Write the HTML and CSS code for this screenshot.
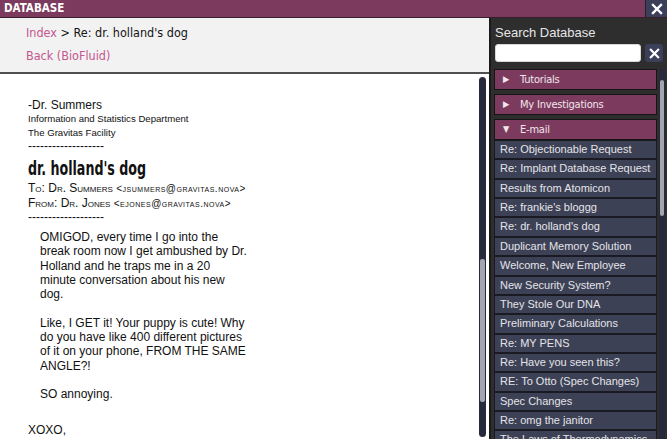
FILE: index.html
```html
<!DOCTYPE html>
<html lang="en">
<head>
<meta charset="utf-8">
<title>Database</title>
<link rel="stylesheet" href="styles.css">
</head>
<body>
<div class="window">
  <header class="titlebar">
    <h1 class="title">DATABASE</h1>
    <button class="close-btn" aria-label="Close">
      <svg viewBox="0 0 12 12" width="12" height="12"><path d="M2 2 L10 10 M10 2 L2 10" stroke="#fff" stroke-width="2.4" stroke-linecap="square"/></svg>
    </button>
  </header>

  <div class="main">
    <section class="article-pane">
      <nav class="crumbs">
        <div class="crumb-line"><a class="link">Index</a> <span class="sep">&gt;</span> <span class="current">Re: dr. holland's dog</span></div>
        <div class="crumb-line"><a class="link">Back (BioFluid)</a></div>
      </nav>
      <div class="article-body">
        <div class="doc">
          <div class="sig">
            <div class="sig-name">-Dr. Summers</div>
            <div class="sig-line">Information and Statistics Department</div>
            <div class="sig-line">The Gravitas Facility</div>
          </div>
          <div class="rule">-------------------</div>
          <h2 class="subject"><span class="subject-text">dr. holland's dog</span></h2>
          <div class="addr">To: Dr. Summers <span class="mail">&lt;jsummers@gravitas.nova&gt;</span></div>
          <div class="addr">From: Dr. Jones <span class="mail">&lt;ejones@gravitas.nova&gt;</span></div>
          <div class="rule">-------------------</div>
          <div class="message">
            <p>OMIGOD, every time I go into the<br>break room now I get ambushed by Dr.<br>Holland and he traps me in a 20<br>minute conversation about his new<br>dog.</p>
            <p>Like, I GET it! Your puppy is cute! Why<br>do you have like 400 different pictures<br>of it on your phone, FROM THE SAME<br>ANGLE?!</p>
            <p>SO annoying.</p>
          </div>
          <div class="signoff">XOXO,<br>Dr. Jones</div>
        </div>
        <div class="scrollbar main-scroll"><div class="thumb"></div></div>
      </div>
    </section>

    <aside class="sidebar">
      <label class="search-label" for="q">Search Database</label>
      <div class="search-row">
        <input id="q" class="search-input" type="text">
        <button class="clear-btn" aria-label="Clear">
          <svg viewBox="0 0 12 12" width="11" height="11"><path d="M2 2 L10 10 M10 2 L2 10" stroke="#fff" stroke-width="2.4" stroke-linecap="square"/></svg>
        </button>
      </div>
      <div class="tree">
        <div class="tree-list">
          <div class="cat"><span class="arrow">&#9654;</span>Tutorials</div>
          <div class="cat"><span class="arrow">&#9654;</span>My Investigations</div>
          <div class="cat open"><span class="arrow">&#9660;</span>E-mail</div>
          <ul class="items">
            <li>Re: Objectionable Request</li>
            <li>Re: Implant Database Request</li>
            <li>Results from Atomicon</li>
            <li>Re: frankie's bloggg</li>
            <li>Re: dr. holland's dog</li>
            <li>Duplicant Memory Solution</li>
            <li>Welcome, New Employee</li>
            <li>New Security System?</li>
            <li>They Stole Our DNA</li>
            <li>Preliminary Calculations</li>
            <li>Re: MY PENS</li>
            <li>Re: Have you seen this?</li>
            <li>RE: To Otto (Spec Changes)</li>
            <li>Spec Changes</li>
            <li>Re: omg the janitor</li>
            <li>The Laws of Thermodynamics</li>
          </ul>
        </div>
        <div class="scrollbar side-scroll"><div class="thumb"></div></div>
      </div>
    </aside>
  </div>
</div>
</body>
</html>
```
FILE: styles.css
```css
* { box-sizing: border-box; }

html, body {
  margin: 0;
  padding: 0;
  width: 667px;
  height: 439px;
  overflow: hidden;
  background: #2c2c2c;
}

.window {
  display: flex;
  flex-direction: column;
  width: 667px;
  height: 439px;
  font-family: "Liberation Sans", Arial, sans-serif;
}

/* ---------- title bar ---------- */
.titlebar {
  display: flex;
  align-items: stretch;
  height: 18px;
  background: #7c3b5e;
  border-bottom: 1px solid #3a1d2c;
  flex: none;
}
.title {
  flex: 1;
  margin: 0;
  padding: 0 0 0 4px;
  font-family: "DejaVu Sans Condensed", "DejaVu Sans", sans-serif;
  font-weight: bold;
  font-size: 11.5px;
  line-height: 17px;
  color: #ffffff;
}
.close-btn {
  width: 22px;
  padding: 0;
  border: 0;
  border-left: 1px solid #22202c;
  background: #3b3f5a;
  display: flex;
  align-items: center;
  justify-content: center;
}

/* ---------- main split ---------- */
.main {
  flex: 1;
  display: flex;
  min-height: 0;
}

.article-pane {
  width: 489px;
  display: flex;
  flex-direction: column;
  background: #ffffff;
}

.crumbs {
  height: 56px;
  flex: none;
  background: #f2f2f2;
  border-bottom: 2px solid #505050;
  padding: 5px 0 0 26px;
  font-family: "DejaVu Sans Condensed", "DejaVu Sans", sans-serif;
  font-size: 12.5px;
}
.crumb-line {
  height: 23px;
  line-height: 20px;
  white-space: nowrap;
}
.link { color: #c4568e; }
.sep, .current { color: #141414; }

.article-body {
  flex: 1;
  display: flex;
  min-height: 0;
  padding: 3px 3px 2px 0;
}

.doc {
  flex: 1;
  overflow: hidden;
  padding: 22px 0 0 28px;
  color: #111;
}

.sig-name { font-size: 12px; line-height: 13px; }
.sig-line { font-size: 9.6px; line-height: 14px; }
.rule { font-size: 12px; line-height: 12px; height: 12px; overflow: hidden; }

.subject {
  margin: 5px 0 2px;
  height: 22px;
  font-family: "DejaVu Sans Condensed", "DejaVu Sans", sans-serif;
  font-weight: bold;
  font-size: 19px;
  line-height: 22px;
  color: #111;
  white-space: nowrap;
}
.subject-text {
  display: inline-block;
  transform: scaleX(0.74);
  transform-origin: left center;
}

.addr {
  font-variant: small-caps;
  font-size: 12px;
  line-height: 15px;
  white-space: nowrap;
}
.mail { font-size: 10px; letter-spacing: 0.5px; }

.message {
  padding-left: 12px;
  margin-top: 7px;
  font-size: 12px;
  line-height: 14.3px;
  white-space: nowrap;
}
.message p { margin: 0 0 14.3px; }

.signoff {
  margin-top: 21px;
  font-size: 12px;
  line-height: 14.3px;
}

/* ---------- scrollbars ---------- */
.scrollbar {
  flex: none;
  display: flex;
  flex-direction: column;
  background: #262a3b;
  border-radius: 4px;
}
.thumb {
  background: #a3a5b1;
  border-radius: 2px;
}
.main-scroll {
  width: 7px;
  padding: 182px 1px 33px;
}
.main-scroll .thumb { height: 143px; }

.side-scroll {
  width: 6px;
  margin: 0 3px 0 2px;
  padding: 11px 1px 0;
  border-radius: 3px 3px 0 0;
}
.side-scroll .thumb { height: 136px; }

/* ---------- sidebar ---------- */
.sidebar {
  width: 178px;
  flex: none;
  background: #2e2e2e;
  border-left: 2px solid #1b1b1b;
  display: flex;
  flex-direction: column;
  padding: 7px 0 0 3px;
  min-height: 0;
}
.search-label {
  color: #e6e6e6;
  font-size: 13px;
  line-height: 15px;
  padding-left: 1px;
}
.search-row {
  display: flex;
  gap: 4px;
  margin-top: 4px;
  height: 18px;
  padding-left: 1px;
}
.search-input {
  width: 146px;
  height: 18px;
  border: 1px solid #d8d8d8;
  border-radius: 3px;
  background: #ffffff;
  padding: 0;
}
.clear-btn {
  width: 18px;
  height: 18px;
  padding: 0;
  border: 0;
  border-radius: 3px;
  background: #3b3f5a;
  display: flex;
  align-items: center;
  justify-content: center;
}

.tree {
  flex: 1;
  display: flex;
  min-height: 0;
  margin-top: 7px;
}
.tree-list {
  width: 163px;
  flex: none;
  overflow: hidden;
}

.cat {
  height: 21px;
  margin-bottom: 4px;
  background: #7c3b5e;
  border: 1px solid #151515;
  color: #f1e6ec;
  font-family: "DejaVu Sans Condensed", "DejaVu Sans", sans-serif;
  font-size: 11px;
  letter-spacing: -0.2px;
  line-height: 19px;
  white-space: nowrap;
}
.cat.open { margin-bottom: 0; }
.arrow {
  display: inline-block;
  width: 25px;
  padding-left: 8px;
  font-size: 9px;
  vertical-align: top;
  line-height: 19px;
  letter-spacing: 0;
}

.items {
  list-style: none;
  margin: 0;
  padding: 0;
}
.items li {
  height: 19.36px;
  background: #3d4156;
  border: 1px solid #1a1b22;
  color: #e4e4e8;
  font-size: 11px;
  line-height: 17px;
  padding-left: 5px;
  white-space: nowrap;
  overflow: hidden;
}
```
